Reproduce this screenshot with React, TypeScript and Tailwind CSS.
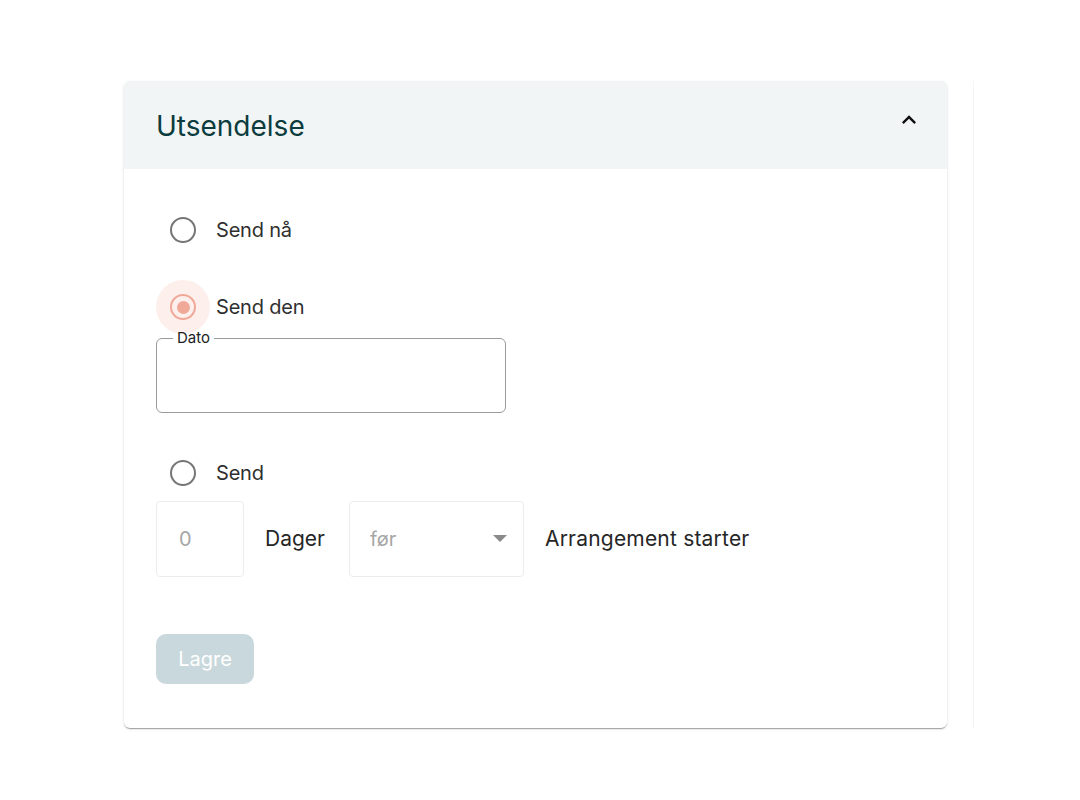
import { useState } from "react";

function Radio({ checked, label }: { checked: boolean; label: string }) {
	return (
		<div className="flex items-center">
			<div
				className={`w-[54px] h-[54px] rounded-full flex items-center justify-center ${checked ? "bg-[#fdefeb]" : ""}`}
			>
				{checked ? (
					<div className="w-[26px] h-[26px] rounded-full border-2 border-[#f0a898] flex items-center justify-center">
						<div className="w-[13px] h-[13px] rounded-full bg-[#f0a898]" />
					</div>
				) : (
					<div className="w-[26px] h-[26px] rounded-full border-2 border-[#767676]" />
				)}
			</div>
			<span className="ml-[6px] text-[20px] text-[#2f2f2f] tracking-[-0.2px] mt-[-1px]">
				{label}
			</span>
		</div>
	);
}

export default function App() {
	const [days] = useState("0");

	return (
		<div
			className="w-[1080px] h-[800px] bg-white overflow-hidden pt-[81px] pl-[124px] flex gap-[26px]"
			style={{ fontFamily: "Inter, 'Noto Sans', sans-serif" }}
		>
			<div className="w-[823px] h-[647px] shrink-0 rounded-[6px] bg-white shadow-[0_2px_1px_-1px_rgba(0,0,0,0.2),0_1px_1px_0_rgba(0,0,0,0.14),0_1px_3px_0_rgba(0,0,0,0.12)] overflow-hidden flex flex-col">
				<div className="h-[88px] bg-[#f2f5f5] flex items-center justify-between pl-[32px] pr-[24px]">
					<h2 className="text-[28px] text-[#0c3c3e] pt-[1px]">
						Utsendelse
					</h2>
					<svg
						width="28"
						height="28"
						viewBox="0 0 24 24"
						className="mb-[10px]"
					>
						<path
							d="M12 8l-6 6 1.41 1.41L12 10.83l4.59 4.58L18 14z"
							fill="#111"
						/>
					</svg>
				</div>

				<div className="flex flex-col pl-[32px] pt-[34px]">
					<Radio checked={false} label="Send nå" />
					<div className="mt-[23px]">
						<Radio checked={true} label="Send den" />
					</div>
					<fieldset className="mt-[-4px] w-[350px] h-[83px] border border-[#9a9a9a] rounded-[6px] px-[12px]">
						<legend className="text-[15px] text-[#222] px-[4px] ml-[4px] leading-[16px]">
							Dato
						</legend>
					</fieldset>
					<div className="mt-[33px]">
						<Radio checked={false} label="Send" />
					</div>
					<div className="flex items-center mt-[1px]">
						<div className="w-[88px] h-[76px] border border-[#ececec] rounded-[4px] flex items-center pl-[22px] text-[20px] text-[#a6a6a6]">
							{days}
						</div>
						<span className="ml-[21px] text-[21px] text-[#262626]">
							Dager
						</span>
						<div className="ml-[24px] w-[175px] h-[76px] border border-[#ececec] rounded-[4px] flex items-center justify-between pl-[20px] pr-[16px] text-[20px] text-[#a6a6a6]">
							<span>før</span>
							<svg width="14" height="8" viewBox="0 0 14 8">
								<path d="M0 0h14L7 7z" fill="#8a8a8a" />
							</svg>
						</div>
						<span className="ml-[21px] text-[21px] text-[#262626] tracking-[0.2px]">
							Arrangement starter
						</span>
					</div>
					<button className="mt-[57px] w-[98px] h-[50px] rounded-[10px] bg-[#c9d8dc] text-white text-[20px]">
						Lagre
					</button>
				</div>
			</div>
			<div className="w-[200px] h-[647px] shrink-0 border-l border-[#f4f4f4]" />
		</div>
	);
}
